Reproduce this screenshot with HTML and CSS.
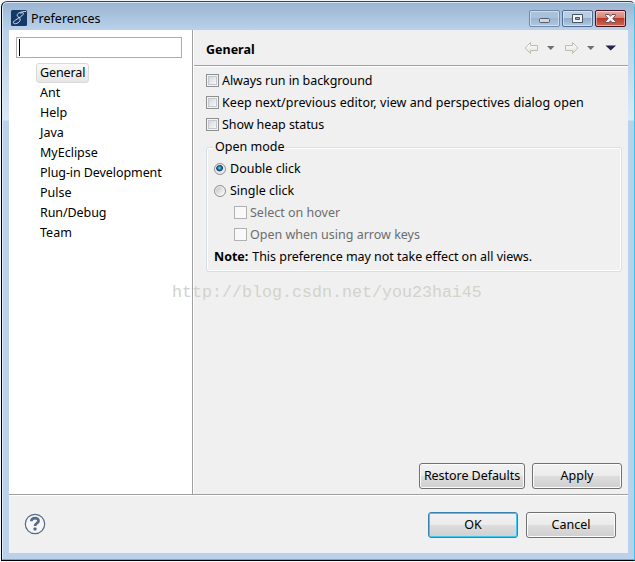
FILE: index.html
```html
<!DOCTYPE html>
<html lang="en">
<head>
<meta charset="utf-8">
<title>Preferences</title>
<link rel="stylesheet" href="styles.css">
</head>
<body>
<div class="window">
  <header class="titlebar">
    <svg class="logo" width="16" height="16" viewBox="0 0 16 16"><rect width="16" height="16" rx="1.5" fill="#143966"/><path d="M15 1.500C10.500 1.500 6 3 6.200 5.300C6.400 7.300 9.600 7.800 9.200 10C8.600 13.300 2.800 14.900 2.300 12.700C1.900 10.500 9.500 8 12 4.600C13.300 2.500 11 2 9.500 3.600" fill="none" stroke="#d8e4ef" stroke-width="1"/></svg>
    <span class="title">Preferences</span>
    <div class="caption">
      <span class="cap"><svg width="28" height="15" viewBox="0 0 28 15"><rect x="9.5" y="7.5" width="10" height="4" rx="1" fill="#d7d7d7" stroke="#555e6c"/></svg></span>
      <span class="cap max"><svg width="28" height="15" viewBox="0 0 28 15"><path d="M9.5 3.500h10v8h-10zM12.500 6.500h4v2h-4z" fill="#f4f4f4" fill-rule="evenodd" stroke="#4a5363"/></svg></span>
      <span class="cap close"><svg width="28" height="15" viewBox="0 0 28 15"><path d="M9.500 3.500h3.500l1.500 1.800 1.500-1.800h3.500v1l-2.700 3 2.700 3v1h-3.500l-1.500-1.800-1.500 1.800h-3.500v-1l2.700-3-2.700-3z" fill="#f5f5f5" stroke="#65545f"/></svg></span>
    </div>
  </header>
  <main class="client">
    <div class="panes">
      <nav class="side">
        <div class="search"><i class="caret"></i></div>
        <ul class="tree">
          <li><span class="selected">General</span></li><li>Ant</li><li>Help</li><li>Java</li><li>MyEclipse</li><li class="tight">Plug-in Development</li><li>Pulse</li><li class="tight">Run/Debug</li><li>Team</li>
        </ul>
      </nav>
      <section class="page">
        <div class="head">
          <b>General</b>
          <svg width="95" height="14" viewBox="0 0 95 14"><defs><linearGradient id="a" x2="0" y2="1"><stop stop-color="#fff"/><stop offset="1" stop-color="#e2e2d8"/></linearGradient></defs>
            <path d="M1 7 6.500 1.500v3h7v5h-7v3z" fill="url(#a)" stroke="#bdbdb5"/><path d="M23 5h7.500l-3.750 4z" fill="#707070"/>
            <path d="M54 7 48.500 1.500v3h-7v5h7v3z" fill="url(#a)" stroke="#bdbdb5"/><path d="M63 5h7.500l-3.750 4z" fill="#707070"/>
            <path d="M81.500 4.500h10.500l-5.250 5z" fill="#25204e"/></svg>
        </div>
        <div class="body">
          <div class="row"><i class="check"></i><span class="tight">Always run in background</span></div>
          <div class="row"><i class="check"></i><span class="loose">Keep next/previous editor, view and perspectives dialog open</span></div>
          <div class="row"><i class="check"></i><span class="tight">Show heap status</span></div>
          <fieldset class="group">
            <legend>Open mode</legend>
            <div class="row"><i class="radio on"></i><span>Double click</span></div>
            <div class="row"><i class="radio"></i><span>Single click</span></div>
            <div class="row sub"><i class="check"></i><span>Select on hover</span></div>
            <div class="row sub"><i class="check"></i><span>Open when using arrow keys</span></div>
            <div class="row note"><b>Note:</b><span>This preference may not take effect on all views.</span></div>
          </fieldset>
          <div class="actions"><span class="btn wide">Restore Defaults</span><span class="btn">Apply</span></div>
        </div>
      </section>
    </div>
    <footer class="foot">
      <svg class="help" width="22" height="22" viewBox="0 0 22 22"><circle cx="11" cy="11" r="9.700" fill="#f6f6f6" stroke="#576a89" stroke-width="1.200"/><path d="M7.300 8.300C7.500 4 14.900 4.200 14.500 8C14.300 10.300 11 10.300 11 13" fill="none" stroke="#576a89" stroke-width="2.700"/><rect x="9.500" y="14.600" width="3" height="2.800" rx=".6" fill="#576a89"/></svg>
      <div class="confirm"><span class="btn default">OK</span><span class="btn">Cancel</span></div>
    </footer>
  </main>
</div>
<div class="watermark">http://blog.csdn.net/you23hai45</div>
</body>
</html>
```
FILE: styles.css
```css
* { box-sizing: border-box; }
body {
  margin: 0;
  width: 635px;
  height: 562px;
  overflow: hidden;
  padding: 1px 0 1px 1px;
  background: #f2f4f6;
  font: 12.5px/20px "Noto Sans", sans-serif;
  color: #000;
}
i { display: block; }
.tight { letter-spacing: -0.08px; }
.loose { letter-spacing: 0.06px; }
.window {
  height: 560px;
  padding: 1px 6px 6px 7px;
  border: 1px solid #000;
  border-top-color: #3d454d;
  border-right-color: #35c5e8;
  border-radius: 6px 5px 0 0;
  box-shadow: inset 0 -1px #35c5e8, inset 1px 0 #dcebf8, inset 0 1px #d5e5f4;
  background: linear-gradient(#9ab4d1, #b9d1ea 28px, #c3d7ec 60px, #dce8f5 118px, #b9d1ea 119px);
}
.titlebar {
  height: 27px;
  display: flex;
  align-items: center;
  padding: 4px 0 0 2px;
}
.logo { margin-bottom: 1px; }
.title { margin-left: 4px; }
.caption { display: flex; gap: 2px; margin: 0 2px 1px auto; }
.cap {
  width: 31px;
  height: 17px;
  border: 1px solid #7189a5;
  border-radius: 2px;
  box-shadow: inset 0 0 0 1px #ffffff70;
  background: linear-gradient(#a9c2dc 50%, #9bb6d2 50%, #aec7e1);
  display: flex;
}
.max { border-color: #526b8c; background: linear-gradient(#b9cee4 50%, #91adca 50%, #adcae6); }
.close { border-color: #4b1320; background: linear-gradient(#e6aca3, #d77d71 50%, #b83b27 50%, #cd6855); }
.client {
  height: 523px;
  background: #f0f0f0;
  display: flex;
  flex-direction: column;
}
.panes {
  height: 465px;
  display: flex;
  border-bottom: 1px solid #a0a0a0;
}
.side {
  width: 184px;
  background: #fff;
  border-right: 1px solid #a0a0a0;
  padding: 7px 0 0 7px;
}
.search { width: 166px; height: 21px; border: 1px solid #abadb3; padding: 1px 2px; }
.caret { width: 1px; height: 17px; background: #000; }
.tree { list-style: none; margin: 5px 0 0; padding: 0 0 0 24px; }
.tree li { height: 20px; display: flex; align-items: center; }
.selected {
  margin-left: -4px;
  padding: 0 3px;
  height: 20px;
  width: 53px;
  line-height: 18px;
  letter-spacing: -0.1px;
  border: 1px solid #d9d9d9;
  border-radius: 3px;
  background: linear-gradient(#fafafa, #e6e6e6);
}
.page { flex: 1; display: flex; flex-direction: column; border-left: 1px solid #fff; }
.head {
  height: 36px;
  padding: 2px 9px 0 12px;
  display: flex;
  align-items: center;
  justify-content: space-between;
  border-bottom: 1px solid #a0a0a0;
  box-shadow: 0 1px #fff;
}
.head b { padding-top: 2px; }
.head svg { margin-top: -2px; }
.body { flex: 1; display: flex; flex-direction: column; padding: 4px 6px 5px 12px; }
.row { height: 22px; display: flex; align-items: center; gap: 3px; white-space: nowrap; }
.check {
  width: 13px;
  height: 13px;
  margin-bottom: 2px;
  border: 1px solid #8e8f8f;
  box-shadow: inset 0 0 0 1px #f4f4f4, inset 0 0 0 2px #c3c8ce;
  background: linear-gradient(135deg, #cbcfd5, #f6f6f6 80%);
}
.radio {
  width: 12px;
  height: 12px;
  border: 1px solid #8e8f8f;
  border-radius: 50%;
  box-shadow: inset 0 0 0 1px #f4f4f4;
  background: linear-gradient(135deg, #b8bcc2, #f6f6f6 80%);
}
.radio.on { background: radial-gradient(circle at 45% 40%, #8fdcf5 0, #2489b8 1.500px, #12385c 3px, #dfe3e6 3.700px); }
.group {
  position: relative;
  margin: 11px 0 0;
  padding: 10px 7px 0;
  height: 125px;
  border: 1px solid #d5dfe5;
  border-radius: 3px;
  box-shadow: inset 0 0 0 1px #fff;
}
.group legend {
  position: absolute;
  top: -11px;
  left: 6px;
  padding: 0 2px;
  background: #f0f0f0;
}
.group .row { gap: 4px; }
.group .sub { gap: 3px; padding-left: 20px; color: #6d6d6d; }
.sub .check { border-color: #b1b1b1; box-shadow: none; background: #f9f9f9; }
.note { letter-spacing: -0.03px; }
.actions { margin-top: auto; display: flex; justify-content: flex-end; gap: 7px; }
.btn {
  width: 90px;
  height: 26px;
  border: 1px solid #707070;
  border-radius: 3px;
  box-shadow: inset 0 0 0 1px #fcfcfc;
  background: linear-gradient(#f2f2f2, #ebebeb 50%, #dddddd 50%, #cfcfcf);
  text-align: center;
  line-height: 24px;
  white-space: nowrap;
}
.wide { width: 106px; letter-spacing: -0.05px; }
.default { border-color: #3c7fb1; box-shadow: inset 0 0 0 1px #3fc8f2; }
.foot {
  flex: 1;
  border-top: 1px solid #fff;
  display: flex;
  align-items: center;
  justify-content: space-between;
  padding: 0 12px 0 15px;
}
.help { margin-bottom: 2px; }
.confirm { display: flex; gap: 8px; }
.watermark {
  position: absolute;
  left: 172px;
  top: 282px;
  font: 16.670px/22px "Liberation Mono", monospace;
  color: #d3d3cc;
}
```
